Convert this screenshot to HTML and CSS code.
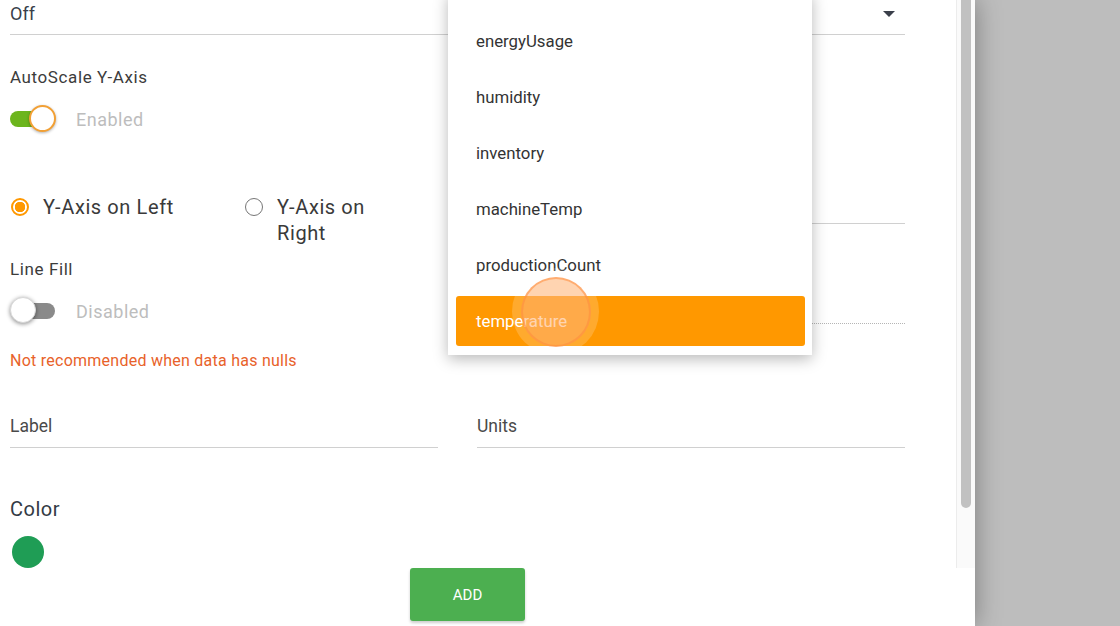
FILE: index.html
```html
<!DOCTYPE html>
<html lang="en">
<head>
    <meta charset="UTF-8">
    <meta name="viewport" content="width=device-width, initial-scale=1.0">
    <title>Add Series</title>
    <link rel="stylesheet" href="styles.css">
</head>
<body>
    <div class="dialog">
        <div class="dialog-body">
            <div class="form">
                <div class="select">
                    <span>Off</span>
                    <span class="caret"></span>
                </div>

                <div class="columns">
                    <div class="col">
                        <div class="field-label">AutoScale Y-Axis</div>
                        <div class="toggle-row">
                            <div class="toggle on"><span class="thumb"></span></div>
                            <span class="toggle-text">Enabled</span>
                        </div>

                        <div class="radio-group">
                            <label class="radio">
                                <span class="dot checked"></span>
                                <span>Y-Axis on Left</span>
                            </label>
                            <label class="radio narrow">
                                <span class="dot"></span>
                                <span>Y-Axis on Right</span>
                            </label>
                        </div>

                        <div class="field-label fill-label">Line Fill</div>
                        <div class="toggle-row">
                            <div class="toggle"><span class="thumb"></span></div>
                            <span class="toggle-text">Disabled</span>
                        </div>
                        <div class="warning">Not recommended when data has nulls</div>
                    </div>

                    <div class="col">
                        <div class="input first">&nbsp;</div>
                        <div class="input disabled">&nbsp;</div>
                    </div>
                </div>

                <div class="columns">
                    <div class="input">Label</div>
                    <div class="input">Units</div>
                </div>

                <div class="color-label">Color</div>
                <div class="swatch"></div>
            </div>

            <div class="scrollbar"><div class="scroll-thumb"></div></div>

            <!-- open dropdown for the series field -->
            <ul class="menu">
                <li>energyUsage</li>
                <li>humidity</li>
                <li>inventory</li>
                <li>machineTemp</li>
                <li>productionCount</li>
                <li class="selected">
                    temperature
                    <span class="ripple-halo"></span>
                    <span class="ripple"></span>
                </li>
            </ul>
        </div>

        <div class="dialog-actions">
            <button class="add-button">ADD</button>
        </div>
    </div>
    <div class="backdrop"></div>
</body>
</html>
```

FILE: styles.css
```css
body {
    margin: 0;
    height: 626px;
    overflow: hidden;
    display: flex;
    font-family: Roboto, "Noto Sans", sans-serif;
    background-color: #bdbdbd;
    color: #333;
}

.dialog {
    width: 975px;
    flex-shrink: 0;
    display: flex;
    flex-direction: column;
    background-color: #ffffff;
    box-shadow: 0 0 24px rgba(0, 0, 0, 0.35);
    position: relative;
    z-index: 1;
}

.backdrop {
    flex: 1;
    background-color: #bdbdbd;
}

.dialog-body {
    height: 568px;
    display: flex;
    position: relative;
}

.form {
    flex: 1;
    padding-left: 10px;
    overflow: hidden;
}

/* top select, scrolled half out of view */
.select {
    width: 895px;
    display: flex;
    justify-content: space-between;
    align-items: center;
    padding: 3px 0 9px;
    border-bottom: 1px solid #d0d0d0;
    font-size: 18px;
    line-height: 22px;
    color: #3a3f4a;
}

.caret {
    width: 0;
    height: 0;
    margin-right: 10px;
    border-left: 6px solid transparent;
    border-right: 6px solid transparent;
    border-top: 6px solid #3a3f4a;
}

.columns {
    display: grid;
    grid-template-columns: 428px 428px;
    gap: 39px;
}

.col {
    display: flex;
    flex-direction: column;
}

.field-label {
    margin-top: 32px;
    font-size: 17px;
    line-height: 20px;
    letter-spacing: 0.6px;
    color: #3c3c3c;
}

.fill-label {
    margin-top: 13px;
}

.toggle-row {
    display: flex;
    align-items: center;
    height: 28px;
    margin-top: 18px;
}

.toggle {
    position: relative;
    width: 40px;
    height: 16px;
    margin: 0 21px 0 5px;
    border-radius: 8px;
    background-color: #8a8a8a;
}

.toggle.on {
    width: 42px;
    margin: 0 24px 0 0;
    background-color: #6cb51d;
}

.toggle .thumb {
    position: absolute;
    top: -6px;
    left: -5px;
    width: 26px;
    height: 26px;
    box-sizing: border-box;
    border-radius: 50%;
    background-color: #fff;
    border: 1px solid #d8d8d8;
    box-shadow: 0 1px 4px rgba(0, 0, 0, 0.45);
}

.toggle.on .thumb {
    left: 19px;
    width: 27px;
    height: 27px;
    border: 2px solid #f2a035;
    box-shadow: 0 1px 3px rgba(0, 0, 0, 0.3);
}

.toggle-text {
    font-size: 18px;
    letter-spacing: 0.5px;
    color: #bdbdbd;
}

.radio-group {
    display: flex;
    margin-top: 61px;
}

.radio {
    display: flex;
    align-items: flex-start;
    width: 234px;
    font-size: 20px;
    line-height: 26px;
    letter-spacing: 0.6px;
    color: #3a3a3a;
}

.radio.narrow {
    width: 130px;
}

.dot {
    flex-shrink: 0;
    width: 18px;
    height: 18px;
    box-sizing: border-box;
    margin: 4px 14px 0 1px;
    border-radius: 50%;
    border: 1.5px solid #767676;
}

.dot.checked {
    border: 2px solid #ff9800;
    background: radial-gradient(circle, #ff9800 0 5px, transparent 5.5px);
}

.warning {
    margin-top: 26px;
    font-size: 16px;
    line-height: 20px;
    letter-spacing: 0.25px;
    color: #e8622a;
}

.input {
    padding-bottom: 10px;
    border-bottom: 1px solid #d0d0d0;
    font-size: 17.5px;
    line-height: 22px;
    color: #4a4a4a;
    margin-top: 44px;
}

.input.first {
    margin-top: 156px;
}

.input.disabled {
    margin-top: 67px;
    border-bottom: 1px dotted #b5b5b5;
}

.color-label {
    margin-top: 49px;
    font-size: 20px;
    line-height: 24px;
    letter-spacing: 0.5px;
    color: #333a45;
}

.swatch {
    width: 32px;
    height: 32px;
    margin: 15px 0 0 2px;
    border-radius: 50%;
    background-color: #1f9d55;
}

.scrollbar {
    width: 10px;
    padding: 0 4px;
    border-left: 1px solid #ececec;
    background-color: #fafafa;
}

.scroll-thumb {
    width: 10px;
    height: 508px;
    border-radius: 0 0 5px 5px;
    background-color: #c1c1c1;
}

/* dropdown menu */
.menu {
    position: absolute;
    left: 448px;
    top: -8px;
    width: 364px;
    margin: 0;
    padding: 21px 7px 9px 8px;
    box-sizing: border-box;
    list-style: none;
    background-color: #fff;
    box-shadow: 0 4px 14px rgba(0, 0, 0, 0.28);
}

.menu li {
    height: 56px;
    line-height: 56px;
    padding-left: 20px;
    font-size: 16.8px;
    color: #333;
}

.menu li.selected {
    position: relative;
    height: 50px;
    line-height: 50px;
    margin-top: 3px;
    border-radius: 3px;
    background-color: #ff9800;
    color: #fff;
}

.ripple,
.ripple-halo {
    position: absolute;
    border-radius: 50%;
}

.ripple-halo {
    left: 56px;
    top: -28px;
    width: 87px;
    height: 87px;
    background-color: rgba(255, 255, 255, 0.18);
}

.ripple {
    left: 65px;
    top: -19px;
    width: 70px;
    height: 70px;
    box-sizing: border-box;
    border: 2px solid rgba(255, 140, 60, 0.55);
    background-color: rgba(255, 170, 100, 0.5);
}

.dialog-actions {
    flex: 1;
    padding-left: 410px;
}

.add-button {
    width: 115px;
    height: 53px;
    border: none;
    border-radius: 3px;
    background-color: #4caf50;
    color: #fff;
    font-family: Roboto, sans-serif;
    font-size: 15px;
    font-weight: 400;
    box-shadow: 0 2px 3px rgba(0, 0, 0, 0.2);
}
```
